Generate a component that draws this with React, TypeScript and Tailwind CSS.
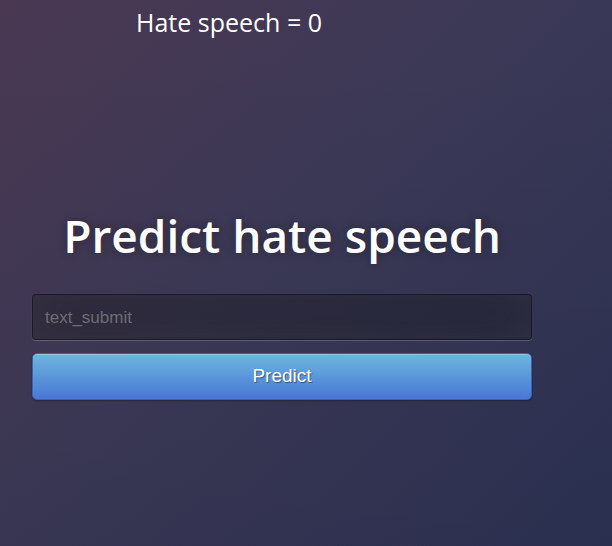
import React from "react";

export default function App() {
  return (
    <div
      className="relative h-[546px] w-[612px] overflow-hidden"
      style={{
        background:
          "linear-gradient(to bottom, rgba(0,0,0,0) 0%, rgba(0,0,0,0.05) 100%), linear-gradient(135deg, #4a3852 0%, #3b3956 45%, #2c3153 100%)",
      }}
    >
      <div className="flex flex-col">
        <p className="mt-[5px] w-[458px] text-center text-[25px] leading-[34px] text-white [font-family:'Open_Sans',sans-serif]">
          Hate speech = 0
        </p>
        <div className="mt-[165px] ml-[32px] flex w-[500px] flex-col">
          <h1 className="text-center text-[46px] font-semibold leading-[63px] text-white [font-family:'Open_Sans',sans-serif] [text-shadow:0_0_10px_rgba(0,0,0,0.3)]">
            Predict hate speech
          </h1>
          <input
            placeholder="text_submit"
            className="mt-[27px] h-[46px] w-[500px] rounded-[4px] border border-[rgba(0,0,0,0.3)] bg-[rgba(0,0,0,0.3)] px-[12px] pt-[2px] text-[17px] text-white outline-none placeholder:text-[#6f6b73] [font-family:'Liberation_Sans',Arial,sans-serif] shadow-[inset_0_-5px_45px_rgba(100,100,100,0.2),0_1px_1px_rgba(255,255,255,0.2)]"
          />
          <button className="mt-[13px] h-[47px] w-[500px] rounded-[5px] border border-[#3762bc] bg-gradient-to-b from-[#6eb6de] to-[#4a77d4] text-[19px] text-white [font-family:'Liberation_Sans',Arial,sans-serif] [text-shadow:1px_1px_1px_rgba(0,0,0,0.4)] shadow-[inset_0_1px_0_rgba(255,255,255,0.2),0_1px_2px_rgba(0,0,0,0.3)]">
            Predict
          </button>
        </div>
      </div>
    </div>
  );
}
